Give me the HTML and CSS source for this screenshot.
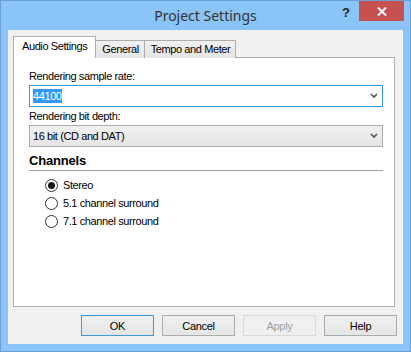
FILE: index.html
```html
<!DOCTYPE html>
<html lang="en">
<head>
    <meta charset="UTF-8">
    <title>Project Settings</title>
    <link rel="stylesheet" href="styles.css">
</head>
<body>
    <div class="window">
        <div class="titlebar">
            <div class="title">Project Settings</div>
            <div class="help-btn">?</div>
            <div class="close-btn">
                <svg width="10" height="9" viewBox="0 0 10 9"><path d="M1 0.5 L9 8.5 M9 0.5 L1 8.5" stroke="#fff" stroke-width="2"/></svg>
            </div>
        </div>

        <div class="client">
            <div class="tabs">
                <div class="tab active">Audio Settings</div>
                <div class="tab">General</div>
                <div class="tab">Tempo and Meter</div>
            </div>

            <div class="panel">
                <div class="field-label">Rendering sample rate:</div>
                <div class="combo focused">
                    <span class="combo-value"><span class="selected">44100</span></span>
                    <span class="arrow"><svg width="8" height="6" viewBox="0 0 8 6"><path d="M1 1 L4 4 L7 1" stroke="#555" stroke-width="1.6" fill="none"/></svg></span>
                </div>

                <div class="field-label">Rendering bit depth:</div>
                <div class="combo readonly">
                    <span class="combo-value">16 bit (CD and DAT)</span>
                    <span class="arrow"><svg width="8" height="6" viewBox="0 0 8 6"><path d="M1 1 L4 4 L7 1" stroke="#555" stroke-width="1.6" fill="none"/></svg></span>
                </div>

                <div class="group-title">Channels</div>
                <div class="radios">
                    <label class="radio checked"><span class="dot"></span>Stereo</label>
                    <label class="radio"><span class="dot"></span>5.1 channel surround</label>
                    <label class="radio"><span class="dot"></span>7.1 channel surround</label>
                </div>
            </div>

            <div class="buttons">
                <button class="btn default">OK</button>
                <button class="btn">Cancel</button>
                <button class="btn" disabled>Apply</button>
                <button class="btn">Help</button>
            </div>
        </div>
    </div>
</body>
</html>
```

FILE: styles.css
```css
* {
    margin: 0;
    padding: 0;
    box-sizing: border-box;
}

body {
    width: 411px;
    height: 352px;
    font-family: "Liberation Sans", Arial, sans-serif;
    font-size: 11px;
    letter-spacing: -0.4px;
    color: #000;
    overflow: hidden;
}

.window {
    width: 411px;
    height: 352px;
    background: #8bc4f6;
    border: 1px solid #6a9fd4;
    display: flex;
    flex-direction: column;
}

/* title bar */
.titlebar {
    height: 29px;
    display: flex;
    align-items: flex-start;
}

.title {
    flex: 1;
    text-align: center;
    padding-left: 77px;
    font-family: "Noto Sans", "Open Sans", sans-serif;
    font-size: 14px;
    letter-spacing: 0;
    color: #333;
    padding-top: 5px;
}

.help-btn {
    width: 26px;
    text-align: center;
    font-weight: bold;
    font-size: 13px;
    letter-spacing: 0;
    color: #222;
    padding-top: 4px;
}

.close-btn {
    width: 45px;
    height: 20px;
    margin-right: 6px;
    background: #c75050;
    display: flex;
    align-items: center;
    justify-content: center;
}

/* client area */
.client {
    flex: 1;
    margin: 0 7px 7px 7px;
    background: #f0f0f0;
    padding: 7px 8px 8px 5px;
    display: flex;
    flex-direction: column;
}

.tabs {
    display: flex;
    align-items: flex-end;
    height: 21px;
    position: relative;
    z-index: 1;
    margin-bottom: -1px;
}

.tab {
    height: 18px;
    padding: 0 5px 0 6px;
    border: 1px solid #adadad;
    border-bottom: none;
    background: linear-gradient(#f0f0f0, #e5e5e5);
    line-height: 17px;
    margin-left: -1px;
}

.tab.active {
    height: 22px;
    background: #fff;
    margin-left: 0;
    padding: 0 8px 0 8px;
    line-height: 18px;
}

.panel {
    flex: 1;
    background: #fff;
    border: 1px solid #adadad;
    padding: 12px 11px 0 15px;
}

.field-label {
    line-height: 13px;
    margin-bottom: 2px;
}

.combo {
    height: 22px;
    display: flex;
    align-items: center;
    border: 1px solid #acacac;
    margin-bottom: 3px;
}

.combo.focused {
    border-color: #3c9ae2;
    background: #fff;
}

.combo.readonly {
    background: linear-gradient(#f0f0f0, #e5e5e5);
    margin-bottom: 6px;
}

.combo-value {
    flex: 1;
    padding-left: 3px;
}

.selected {
    background: #3399ff;
    color: #fff;
    padding: 1px 0;
}

.arrow {
    width: 17px;
    display: flex;
    justify-content: center;
}

.group-title {
    font-weight: bold;
    font-size: 13px;
    letter-spacing: -0.2px;
    line-height: 15px;
    padding-bottom: 2px;
    border-bottom: 1px solid #a0a0a0;
    margin-bottom: 5px;
}

.radios {
    padding-left: 16px;
    display: flex;
    flex-direction: column;
}

.radio {
    display: flex;
    align-items: center;
    height: 18px;
}

.dot {
    width: 13px;
    height: 13px;
    border: 1px solid #333;
    border-radius: 50%;
    background: #fff;
    margin-right: 5px;
    display: flex;
    align-items: center;
    justify-content: center;
}

.radio.checked .dot::after {
    content: '';
    width: 7px;
    height: 7px;
    border-radius: 50%;
    background: #1a1a1a;
}

/* buttons */
.buttons {
    display: flex;
    justify-content: flex-end;
    gap: 8px;
    padding-top: 8px;
    margin-right: -2px;
}

.btn {
    width: 73px;
    height: 21px;
    font-family: "Liberation Sans", Arial, sans-serif;
    font-size: 11px;
    letter-spacing: -0.3px;
    color: #000;
    border: 1px solid #acacac;
    background: linear-gradient(#f0f0f0, #e5e5e5);
}

.btn.default {
    border-color: #3c9ae2;
}

.btn:disabled {
    color: #a0a0a0;
    border-color: #d9d9d9;
    background: #f0f0f0;
}
```
